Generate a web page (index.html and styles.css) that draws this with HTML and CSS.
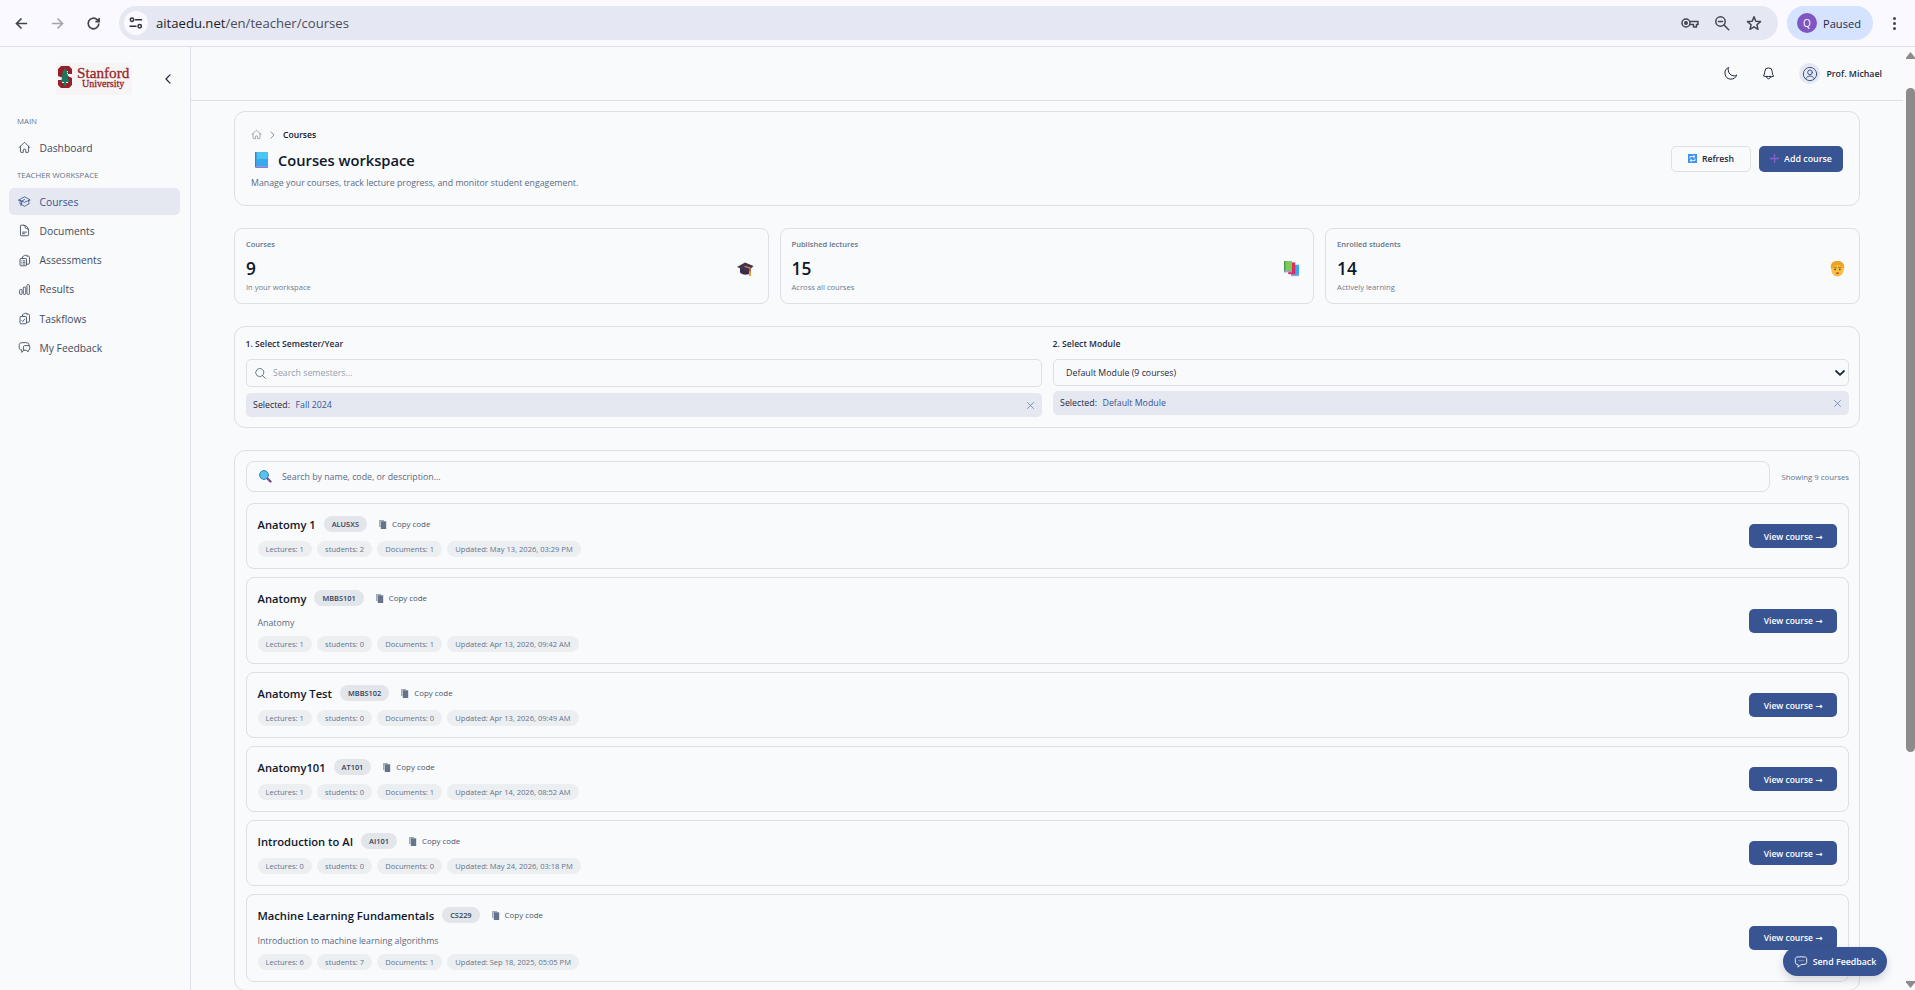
FILE: index.html
```html
<!DOCTYPE html>
<html lang="en">
<head>
    <meta charset="UTF-8">
    <meta name="viewport" content="width=device-width, initial-scale=1.0">
    <title>Courses workspace</title>
    <link rel="stylesheet" href="styles.css">
</head>
<body>
<svg class="sprite" width="0" height="0">
    <symbol id="home" viewBox="0 0 24 24"><path d="M2.25 12l8.95-8.95c.44-.44 1.15-.44 1.6 0L21.75 12M4.5 9.75v10.1c0 .63.5 1.15 1.13 1.15H9.75v-4.9c0-.6.5-1.1 1.13-1.1h2.25c.62 0 1.12.5 1.12 1.1V21h4.13c.62 0 1.12-.5 1.12-1.13V9.75"/></symbol>
    <symbol id="cap" viewBox="0 0 24 24"><path d="M4.26 10.15a60 60 0 0 0-.5 6.35A48.600 48.600 0 0 1 12 20.900a48.600 48.600 0 0 1 8.230-4.400 60 60 0 0 0-.49-6.350M1.600 9.330A60 60 0 0 1 12 3.490a60 60 0 0 1 10.400 5.840 51 51 0 0 0-10.400 4.140A51 51 0 0 0 1.600 9.330zM6.750 15v-3.700A55 55 0 0 1 12 8.440M5 20c1.200-1.300 1.750-3 1.750-5"/></symbol>
    <symbol id="doc" viewBox="0 0 24 24"><path d="M19.500 14.250v-2.600a3.400 3.400 0 0 0-3.400-3.400h-1.500c-.6 0-1.100-.5-1.100-1.100V5.600a3.400 3.400 0 0 0-3.400-3.400H5.600c-.6 0-1.100.5-1.100 1.100v17.300c0 .6.500 1.100 1.100 1.100h12.800c.6 0 1.100-.5 1.100-1.100zM10.500 2.250a9 9 0 0 1 9 9M8.250 15h7.500m-7.500 3H12"/></symbol>
    <symbol id="clip-list" viewBox="0 0 24 24"><path d="M16 18.750h3a2.250 2.250 0 0 0 2.250-2.250V6.100c0-1.100-.8-2-1.900-2.200l-3-.2M8.250 6.100c0-1.100.8-2 1.900-2.200l1.200-.1A2.250 2.250 0 0 1 13.500 2.250H15a2.250 2.250 0 0 1 2.200 1.600M8.250 8.250H4.900c-.6 0-1.100.5-1.100 1.100v11.300c0 .6.500 1.100 1.100 1.100h9.700c.6 0 1.100-.5 1.100-1.100V9.400c0-.6-.5-1.100-1.100-1.100zM8.250 8.250V6.100M7 12.500h.1M7 15.500h.1M7 18.500h.1M9.800 12.500h3M9.800 15.500h3M9.800 18.500h3"/></symbol>
    <symbol id="clip-check" viewBox="0 0 24 24"><path d="M16 18.750h3a2.250 2.250 0 0 0 2.250-2.250V6.100c0-1.100-.8-2-1.900-2.200l-3-.2M8.250 6.100c0-1.100.8-2 1.900-2.200l1.200-.1A2.250 2.250 0 0 1 13.500 2.250H15a2.250 2.250 0 0 1 2.200 1.600M8.250 8.250H4.900c-.6 0-1.100.5-1.100 1.100v11.300c0 .6.500 1.100 1.100 1.100h9.700c.6 0 1.100-.5 1.100-1.100V9.400c0-.6-.5-1.100-1.100-1.100zM8.250 8.250V6.100M7 15.700l1.900 1.900 3.600-4.600"/></symbol>
    <symbol id="bars" viewBox="0 0 24 24"><path d="M3 13.100c0-.6.500-1.100 1.100-1.100h2.300c.6 0 1.100.5 1.100 1.100v6.800c0 .6-.5 1.100-1.100 1.100H4.100c-.6 0-1.100-.5-1.100-1.100zM9.750 8.600c0-.6.500-1.100 1.100-1.100h2.300c.6 0 1.100.5 1.100 1.100v11.300c0 .6-.5 1.100-1.100 1.100h-2.300c-.6 0-1.100-.5-1.100-1.100zM16.500 4.100c0-.6.500-1.100 1.100-1.100h2.300c.6 0 1.100.5 1.100 1.100v15.800c0 .6-.5 1.100-1.100 1.100h-2.300c-.6 0-1.100-.5-1.100-1.100z"/></symbol>
    <symbol id="chats" viewBox="0 0 24 24"><path d="M20.250 8.500c.9.300 1.500 1.100 1.500 2.100v4.300c0 1.100-.8 2.100-2 2.200l-1 .1v3l-3-3c-1.400 0-2.700-.1-4-.2-.6 0-1.100-.3-1.400-.6M20.250 8.500a48 48 0 0 0-8.300 0c-1.100.1-1.900 1-1.900 2.100v4.300c0 .8.500 1.600 1.200 2M20.250 8.500V6.600c0-1.600-1.100-3-2.800-3.200a48 48 0 0 0-12.400 0C3.400 3.600 2.250 5 2.250 6.600v6.300c0 1.600 1.200 3 2.800 3.200l1.900.2V21l4.200-4.200"/></symbol>
    <symbol id="chat" viewBox="0 0 24 24"><path d="M8.600 9.800h.1m3.300 0h.1m3.300 0h.1M2.250 12.800c0 1.600 1.100 3 2.700 3.200l2.100.3V21l4.200-4.200c.2-.2.500-.3.800-.3 2.300-.1 4.600-.3 6.900-.6a3.300 3.300 0 0 0 2.800-3.200V6.700c0-1.600-1.200-3-2.800-3.200a48 48 0 0 0-14 0C3.400 3.700 2.250 5.100 2.250 6.700z"/></symbol>
    <symbol id="search" viewBox="0 0 24 24"><path d="M21 21l-5.200-5.200m0 0A7.500 7.500 0 1 0 5.200 5.200a7.500 7.500 0 0 0 10.600 10.600z"/></symbol>
    <symbol id="close" viewBox="0 0 24 24"><path d="M4 4l16 16M20 4L4 20"/></symbol>
    <symbol id="copy" viewBox="0 0 8 9"><path d="M0 0h5v1.500H1.500V7H0z" fill="#a3abb8"/><path d="M1.800 1.300h5.400V9H1.800z" fill="#64748b"/></symbol>
</svg>

<div class="browser">
    <svg class="nav-icon back" viewBox="0 0 24 24"><path d="M21 12H4M12 4l-8 8 8 8"/></svg>
    <svg class="nav-icon forward" viewBox="0 0 24 24"><path d="M3 12h17M12 4l8 8-8 8"/></svg>
    <svg class="nav-icon reload" viewBox="0 0 24 24"><path d="M20.500 12a8.500 8.500 0 1 1-2.700-6.200L21 9M21 3v6h-6"/></svg>
    <div class="omnibox">
        <span class="site-info">
            <svg viewBox="0 0 14 12"><circle cx="3" cy="2.700" r="1.700"/><path d="M6.500 2.700h6M1 9.300h6"/><circle cx="10.700" cy="9.300" r="1.700"/></svg>
        </span>
        <span class="url"><b>aitaedu.net</b>/en/teacher/courses</span>
        <svg class="omni-icon key" viewBox="0 0 18 10"><circle cx="5" cy="5" r="4"/><circle cx="5" cy="5" r="1.200" class="dot"/><path d="M9 3.500h8v3h-1.500V9h-3V6.500H9"/></svg>
        <svg class="omni-icon" viewBox="0 0 16 16"><circle cx="6.500" cy="6.500" r="4.700"/><path d="M10 10l4.700 4.700M4.500 6.500h4"/></svg>
        <svg class="omni-icon" viewBox="0 0 16 16"><path d="M8 1.800l1.800 4.400 4.700.4-3.600 3.100 1.100 4.600L8 11.800l-4 2.500 1.100-4.600L1.500 6.600l4.700-.4z"/></svg>
    </div>
    <div class="profile"><span class="badge">Q</span>Paused</div>
    <div class="dots"><i></i><i></i><i></i></div>
</div>

<div class="app">
    <aside class="sidebar">
        <div class="brand">
            <div class="logo">
                <svg viewBox="0 0 14 22"><path d="M3 0h8l3 3v5h-4V5H5v3l9 4v7l-3 3H3l-3-3v-5h4v3h6v-3L0 10V3z" fill="#96202a"/><path d="M7 2l3 5H8.800l2 4H9.500l2 5H8v4H6v-4H2.500l2-5H3.200l2-4H4z" fill="#17795f"/></svg>
                <div class="logo-text"><span>Stanford</span><small>University</small></div>
            </div>
            <svg class="collapse" viewBox="0 0 6 10"><path d="M5 .8L1 5l4 4.200"/></svg>
        </div>
        <div class="nav-label">MAIN</div>
        <a class="nav-item"><svg><use href="#home"/></svg>Dashboard</a>
        <div class="nav-label second">TEACHER WORKSPACE</div>
        <a class="nav-item active"><svg><use href="#cap"/></svg>Courses</a>
        <a class="nav-item"><svg><use href="#doc"/></svg>Documents</a>
        <a class="nav-item"><svg><use href="#clip-list"/></svg>Assessments</a>
        <a class="nav-item"><svg><use href="#bars"/></svg>Results</a>
        <a class="nav-item"><svg><use href="#clip-check"/></svg>Taskflows</a>
        <a class="nav-item"><svg><use href="#chats"/></svg>My Feedback</a>
    </aside>

    <div class="content">
        <header class="topbar">
            <svg class="moon" viewBox="0 0 24 24"><path d="M21.750 15a9.700 9.700 0 0 1-3.700.8A9.750 9.750 0 0 1 8.250 6c0-1.300.3-2.600.8-3.700A9.750 9.750 0 0 0 12.750 21a9.750 9.750 0 0 0 9-6z"/></svg>
            <svg class="bell" viewBox="0 0 24 24"><path d="M14.900 17.500c1.800-.2 3.600-.6 5.400-1.300A9 9 0 0 1 18 9.750V9A6 6 0 0 0 6 9v.75a9 9 0 0 1-2.300 6c1.700.6 3.500 1 5.400 1.300m5.800-.5a24 24 0 0 1-5.800.2m5.800 0a3 3 0 1 1-5.800 0"/></svg>
            <span class="avatar"><svg viewBox="0 0 24 24"><circle cx="12" cy="12" r="10"/><circle cx="12" cy="9.500" r="3.500"/><path d="M5.500 19c1.500-2.500 4-4 6.500-4s5 1.500 6.500 4"/></svg></span>
            <span class="user">Prof. Michael</span>
        </header>

        <main>
            <section class="card hero">
                <div class="hero-text">
                    <div class="crumbs">
                        <svg><use href="#home"/></svg>
                        <svg class="chev" viewBox="0 0 6 10"><path d="M1 1l4 4-4 4"/></svg>
                        <span>Courses</span>
                    </div>
                    <h1>
                        <svg viewBox="0 0 13 16"><path d="M0 0h13v14H0z" fill="#4ac6f5"/><path d="M2 7h11v7H2z" fill="#3aa8ef"/><path d="M0 0h1.500v15.500H0z" fill="#2f86c6"/><path d="M1 14h12v1H1z" fill="#a48fdf"/><path d="M1 15h12v.8H1z" fill="#4c76c8"/></svg>
                        Courses workspace
                    </h1>
                    <p>Manage your courses, track lecture progress, and monitor student engagement.</p>
                </div>
                <button class="btn outline"><svg viewBox="0 0 9 9"><path d="M0 0h9v9H0z" fill="#3f94f2"/><path d="M2 4V2.500h4.500M7 5v1.500H2.500M5.500 1.300L7 2.500 5.500 3.700M3.500 5.300L2 6.500l1.500 1.200" fill="none" stroke="#fff" stroke-width=".8"/></svg>Refresh</button>
                <button class="btn primary"><svg viewBox="0 0 9 9"><path d="M4.500 0v9M0 4.500h9" stroke="#8660c8" stroke-width="1.400"/></svg>Add course</button>
            </section>

            <section class="stats">
                <div class="card stat">
                    <div><span class="stat-label">Courses</span><strong>9</strong><small>In your workspace</small></div>
                    <svg viewBox="0 0 17 15"><path d="M3 6l11 1v4c-3 3-8 3-11 0z" fill="#3a2b4b"/><path d="M0 5.500L8 1l8.500 3.500L11 10z" fill="#40334f"/><path d="M8 5l5 1.500V13" fill="none" stroke="#f1913d" stroke-width="1.200"/><path d="M12 10h2v4.500h-2z" fill="#f49a45"/></svg>
                </div>
                <div class="card stat">
                    <div><span class="stat-label">Published lectures</span><strong>15</strong><small>Across all courses</small></div>
                    <svg viewBox="0 0 17 17"><path d="M8 4h8.500v12H8z" fill="#36aaf0"/><path d="M8 14.500h8.500V16H8z" fill="#9c9ce8"/><path d="M5 1.500h7.500V14H5z" fill="#df2d5c"/><path d="M.5 0H9v10.500H.5z" fill="#7ccc58"/><path d="M.5 0H2v12H.5z" fill="#489755"/><path d="M1 10.500h8V12H1z" fill="#a99ada"/></svg>
                </div>
                <div class="card stat">
                    <div><span class="stat-label">Enrolled students</span><strong>14</strong><small>Actively learning</small></div>
                    <svg class="face" viewBox="0 0 15 17"><ellipse cx="7.500" cy="9" rx="6.600" ry="7.500" fill="#f9bf3a"/><path d="M.5 9C-.5 2 3 0 7.500 0s8 2.500 7 9l-1.500-3L9 4 4 5 1.500 7z" fill="#eba324"/><path d="M3.500 6.800h3M8.500 6.800h3" stroke="#a4602a" stroke-width=".8"/><circle cx="5" cy="8.800" r=".9" fill="#4d3c50"/><circle cx="10" cy="8.800" r=".9" fill="#4d3c50"/><ellipse cx="7.500" cy="13" rx="1.600" ry="1" fill="#c4542c"/></svg>
                </div>
            </section>

            <section class="card filters">
                <div class="filter">
                    <label>1. Select Semester/Year</label>
                    <div class="field search-field"><svg><use href="#search"/></svg>Search semesters...</div>
                    <div class="selected"><span>Selected:</span><em>Fall 2024</em><svg><use href="#close"/></svg></div>
                </div>
                <div class="filter">
                    <label>2. Select Module</label>
                    <div class="field select-field">Default Module (9 courses)<svg viewBox="0 0 10 6"><path d="M1 1l4 3.800L9 1"/></svg></div>
                    <div class="selected"><span>Selected:</span><em>Default Module</em><svg><use href="#close"/></svg></div>
                </div>
            </section>

            <section class="card courses">
                <div class="list-head">
                    <div class="list-search"><svg viewBox="0 0 13 13"><path d="M8.500 8.500l3 3" stroke="#7b4a80" stroke-width="2.400"/><circle cx="5" cy="5" r="4.400" fill="#56c5ee" stroke="#3a7fae" stroke-width="1"/></svg>Search by name, code, or description...</div>
                    <span class="count">Showing 9 courses</span>
                </div>

                <article class="course">
                    <div>
                        <div class="course-head"><h2>Anatomy 1</h2><span class="code">ALU5XS</span><span class="copy"><svg><use href="#copy"/></svg>Copy code</span></div>
                        <div class="chips"><span>Lectures: 1</span><span>students: 2</span><span>Documents: 1</span><span>Updated: May 13, 2026, 03:29 PM</span></div>
                    </div>
                    <button class="view">View course <i>→</i></button>
                </article>

                <article class="course">
                    <div>
                        <div class="course-head"><h2>Anatomy</h2><span class="code">MBBS101</span><span class="copy"><svg><use href="#copy"/></svg>Copy code</span></div>
                        <p>Anatomy</p>
                        <div class="chips"><span>Lectures: 1</span><span>students: 0</span><span>Documents: 1</span><span>Updated: Apr 13, 2026, 09:42 AM</span></div>
                    </div>
                    <button class="view">View course <i>→</i></button>
                </article>

                <article class="course">
                    <div>
                        <div class="course-head"><h2>Anatomy Test</h2><span class="code">MBBS102</span><span class="copy"><svg><use href="#copy"/></svg>Copy code</span></div>
                        <div class="chips"><span>Lectures: 1</span><span>students: 0</span><span>Documents: 0</span><span>Updated: Apr 13, 2026, 09:49 AM</span></div>
                    </div>
                    <button class="view">View course <i>→</i></button>
                </article>

                <article class="course">
                    <div>
                        <div class="course-head"><h2>Anatomy101</h2><span class="code">AT101</span><span class="copy"><svg><use href="#copy"/></svg>Copy code</span></div>
                        <div class="chips"><span>Lectures: 1</span><span>students: 0</span><span>Documents: 1</span><span>Updated: Apr 14, 2026, 08:52 AM</span></div>
                    </div>
                    <button class="view">View course <i>→</i></button>
                </article>

                <article class="course">
                    <div>
                        <div class="course-head"><h2>Introduction to AI</h2><span class="code">AI101</span><span class="copy"><svg><use href="#copy"/></svg>Copy code</span></div>
                        <div class="chips"><span>Lectures: 0</span><span>students: 0</span><span>Documents: 0</span><span>Updated: May 24, 2026, 03:18 PM</span></div>
                    </div>
                    <button class="view">View course <i>→</i></button>
                </article>

                <article class="course">
                    <div>
                        <div class="course-head"><h2>Machine Learning Fundamentals</h2><span class="code">CS229</span><span class="copy"><svg><use href="#copy"/></svg>Copy code</span></div>
                        <p>Introduction to machine learning algorithms</p>
                        <div class="chips"><span>Lectures: 6</span><span>students: 7</span><span>Documents: 1</span><span>Updated: Sep 18, 2025, 05:05 PM</span></div>
                    </div>
                    <button class="view">View course <i>→</i></button>
                </article>
            </section>
        </main>
    </div>

    <div class="scrollbar">
        <svg viewBox="0 0 9 7"><path d="M4.500 0L9 5.500V7H0V5.500z"/></svg>
        <div class="thumb"></div>
        <svg class="down" viewBox="0 0 9 7"><path d="M4.500 7L9 1.500V0H0v1.500z"/></svg>
    </div>
</div>

<button class="feedback"><svg><use href="#chat"/></svg>Send Feedback</button>
</body>
</html>
```
FILE: styles.css
```css
* {
    margin: 0;
    padding: 0;
    box-sizing: border-box;
}

body {
    height: 990px;
    overflow: hidden;
    background: #f9fafc;
    color: #1e293b;
    font-family: 'Open Sans', 'Noto Sans', sans-serif;
    font-size: 8.8px;
}

svg {
    display: block;
    flex: none;
    fill: none;
    stroke: currentColor;
    stroke-width: 1.5;
    stroke-linecap: round;
    stroke-linejoin: round;
}

svg [fill]:not([stroke]) {
    stroke: none;
}

button {
    font-family: inherit;
    border: none;
}

.sprite {
    position: absolute;
}

/* browser bar */
.browser {
    display: flex;
    align-items: center;
    height: 47px;
    padding: 6px 14px;
    background: #faf9ff;
    border-bottom: 1px solid #dcdfe8;
}

.nav-icon {
    width: 15px;
    height: 15px;
    margin-right: 21px;
    color: #41454f;
    stroke-width: 2.7;
    stroke-linecap: butt;
    stroke-linejoin: miter;
}

.nav-icon.forward {
    color: #a5a6ad;
}

.nav-icon.reload {
    margin-right: 18px;
}

.omnibox {
    display: flex;
    align-items: center;
    width: 1659px;
    height: 34px;
    padding: 0 16px 0 5px;
    border-radius: 17px;
    background: #e5e7f2;
}

.site-info {
    display: flex;
    align-items: center;
    justify-content: center;
    width: 24px;
    height: 24px;
    border-radius: 50%;
    background: #faf9ff;
}

.site-info svg {
    width: 14px;
    height: 12px;
    color: #30333b;
}

.url {
    flex: 1;
    margin-left: 8px;
    font-size: 13.1px;
    color: #4a4e5a;
}

.url b {
    font-weight: 400;
    color: #1c1d22;
}

.omni-icon {
    width: 16px;
    height: 16px;
    margin-left: 16px;
    color: #43464f;
}

.omni-icon.key {
    width: 18px;
    height: 10px;
    margin: 0 -1px 0 0;
}

.omni-icon .dot {
    fill: currentColor;
}

.profile {
    display: flex;
    align-items: center;
    width: 86px;
    height: 34px;
    margin-left: 9px;
    padding-left: 10px;
    border-radius: 17px;
    background: #d5e3ff;
    color: #1c2a4c;
    font-size: 11.1px;
}

.badge {
    width: 20px;
    height: 20px;
    margin-right: 6px;
    border-radius: 50%;
    background: #7e57c2;
    color: #fff;
    font-size: 10px;
    line-height: 20px;
    text-align: center;
}

.dots {
    display: flex;
    flex-direction: column;
    gap: 2px;
    margin-left: 20px;
}

.dots i {
    width: 3px;
    height: 3px;
    border-radius: 50%;
    background: #43464f;
}

/* app shell */
.app {
    display: flex;
    height: 943px;
}

.sidebar {
    width: 191px;
    padding: 0 10px 0 9px;
    border-right: 1px solid #dbdfe7;
}

.brand {
    display: flex;
    align-items: center;
    justify-content: space-between;
    height: 63px;
    padding: 0 9px 0 47px;
}

.logo {
    display: flex;
    align-items: center;
    gap: 5px;
    width: 76px;
    height: 32px;
    padding: 0 0 3px 2px;
    background: #f6f4f4;
    color: #97262b;
    font-family: 'Liberation Serif', serif;
}

.logo svg {
    width: 14px;
    height: 22px;
}

.logo-text {
    text-align: center;
    -webkit-text-stroke: 0.3px #97262b;
}

.logo-text span {
    display: block;
    font-size: 15.2px;
    line-height: 13px;
}

.logo-text small {
    display: block;
    font-size: 10px;
    line-height: 10px;
}

.collapse {
    width: 6px;
    height: 10px;
    stroke-width: 1.2;
}

.nav-label {
    height: 23px;
    padding-left: 8px;
    color: #64748b;
    font-size: 7.8px;
    font-weight: 500;
    line-height: 23px;
}

.nav-label.second {
    height: 26px;
    line-height: 26px;
}

.nav-item {
    display: flex;
    align-items: center;
    gap: 8.5px;
    height: 27px;
    margin-bottom: 2.3px;
    padding-left: 9px;
    border-radius: 5px;
    color: #3f4b5d;
    font-size: 10.3px;
}

.nav-label + .nav-item:not(.active) {
    height: 29px;
    margin-bottom: 0;
}

.nav-item svg {
    width: 13px;
    height: 13px;
    stroke-width: 1.6;
}

.nav-item.active {
    background: #e5e8f0;
    color: #385493;
}

.content {
    width: 1712px;
}

.topbar {
    display: flex;
    align-items: center;
    justify-content: flex-end;
    height: 54px;
    padding-right: 21px;
    border-bottom: 1px solid #dbdfe7;
}

.moon,
.bell {
    width: 15px;
    height: 15px;
    margin-right: 23px;
    stroke-width: 1.6;
}

.avatar {
    display: flex;
    align-items: center;
    justify-content: center;
    width: 21px;
    height: 21px;
    margin-right: 6px;
    border-radius: 50%;
    background: #e5e8f0;
    color: #385493;
}

.avatar svg {
    width: 16px;
    height: 16px;
}

.user {
    font-size: 8.8px;
    font-weight: 600;
}

main {
    display: flex;
    flex-direction: column;
    gap: 22px;
    height: 889px;
    padding: 10px 43px 0;
    overflow: hidden;
}

.card {
    flex: none;
    border: 1px solid #dcdfe5;
    border-radius: 11px;
}

/* page header */
.hero {
    display: flex;
    align-items: center;
    height: 95px;
    padding: 0 16px;
}

.hero-text {
    flex: 1;
}

.crumbs {
    display: flex;
    align-items: center;
    height: 14px;
    color: #0f172a;
    font-size: 8.6px;
    font-weight: 600;
}

.crumbs svg {
    width: 11px;
    height: 11px;
    color: #7b8798;
}

.crumbs .chev {
    width: 5px;
    height: 8px;
    margin: 0 8.500px 0 7.500px;
    stroke-width: 1.1;
}

h1 {
    display: flex;
    align-items: center;
    gap: 10px;
    height: 22px;
    margin: 7px 0 5px;
    padding-left: 4px;
    color: #0f172a;
    font-size: 14.7px;
    font-weight: 600;
}

h1 svg {
    width: 13px;
    height: 16px;
}

.hero p {
    color: #5b6a80;
    line-height: 14px;
}

.btn {
    display: flex;
    align-items: center;
    justify-content: center;
    gap: 5px;
    height: 26px;
    border-radius: 5px;
    font-size: 8.7px;
    font-weight: 600;
}

.btn svg {
    width: 9px;
    height: 9px;
}

.btn.outline {
    width: 80px;
    margin-right: 8px;
    border: 1px solid #dcdfe5;
    background: transparent;
    color: #1e293b;
}

.btn.primary {
    width: 84px;
    background: #385493;
    color: #fff;
    font-size: 8.9px;
}

/* stat cards */
.stats {
    display: grid;
    grid-template-columns: repeat(3, 1fr);
    gap: 10.67px;
}

.stat {
    display: flex;
    align-items: center;
    justify-content: space-between;
    height: 76px;
    padding: 0 13.500px 0 11px;
    border-radius: 8px;
}

.stat span,
.stat strong,
.stat small {
    display: block;
}

.stat-label {
    color: #64748b;
    font-size: 7.5px;
    font-weight: 600;
    line-height: 11px;
}

.stat strong {
    margin: 7.5px 0 3.5px;
    color: #0f172a;
    font-size: 17.3px;
    font-weight: 600;
    line-height: 21px;
}

.stat small {
    color: #6e7b8d;
    font-size: 7.6px;
    line-height: 11px;
}

.stat svg {
    width: 17px;
    height: 16px;
    margin-top: 6px;
}

.stat .face {
    width: 15px;
}

/* semester and module pickers */
.filters {
    display: grid;
    grid-template-columns: 1fr 1fr;
    gap: 10.6px;
    height: 102px;
    padding: 9px 10px 0 10.6px;
}

.filter label {
    display: block;
    height: 23px;
    font-size: 8.6px;
    font-weight: 600;
    line-height: 17px;
}

.field {
    display: flex;
    align-items: center;
    border: 1px solid #dcdfe5;
    border-radius: 5px;
}

.search-field {
    gap: 6px;
    height: 28px;
    margin-bottom: 6px;
    padding-left: 7.5px;
    color: #94a0af;
}

.search-field svg {
    width: 13px;
    height: 13px;
    color: #64748b;
    stroke-width: 1.8;
}

.select-field {
    justify-content: space-between;
    height: 27px;
    margin-bottom: 5px;
    padding: 0 3px 0 12.500px;
}

.select-field svg {
    width: 10px;
    height: 6px;
    stroke-width: 1.8;
}

.selected {
    display: flex;
    align-items: center;
    height: 24px;
    padding: 0 7.5px;
    border-radius: 5px;
    background: #e5e8f0;
}

.selected em {
    flex: 1;
    margin-left: 5.5px;
    color: #385493;
    font-style: normal;
    font-weight: 500;
}

.selected svg {
    width: 9px;
    height: 9px;
    color: #6d82b0;
    stroke-width: 2.2;
}

/* course list */
.courses {
    padding: 10px 10px 0 11px;
}

.list-head {
    display: flex;
    align-items: center;
    justify-content: space-between;
    margin-bottom: 11px;
}

.list-search {
    display: flex;
    align-items: center;
    gap: 10px;
    width: 1524px;
    height: 31px;
    padding-left: 12px;
    border: 1px solid #dcdfe5;
    border-radius: 8px;
    color: #5b6a80;
}

.list-search svg {
    width: 13px;
    height: 13px;
}

.count {
    color: #64748b;
    font-size: 7.8px;
    font-weight: 500;
}

.course {
    display: flex;
    align-items: center;
    justify-content: space-between;
    margin-bottom: 8px;
    padding: 11px 11px 11px 10.500px;
    border: 1px solid #dcdfe5;
    border-radius: 8px;
}

.course-head {
    display: flex;
    align-items: center;
    height: 18px;
}

h2 {
    color: #0f172a;
    font-size: 11.2px;
    font-weight: 600;
}

.code {
    height: 16px;
    margin: 0 12px 0 8px;
    padding: 0 8px;
    border-radius: 8px;
    background: #e2e5e9;
    color: #334155;
    font-size: 7.4px;
    font-weight: 600;
    line-height: 16px;
}

.copy {
    display: flex;
    align-items: center;
    gap: 5px;
    color: #475569;
    font-size: 7.9px;
    font-weight: 500;
}

.copy svg {
    width: 8px;
    height: 9px;
}

.course p {
    height: 14px;
    margin-top: 7.3px;
    color: #5b6a80;
    line-height: 18px;
}

.chips {
    display: flex;
    gap: 5.3px;
    margin-top: 8px;
}

.chips span {
    height: 16px;
    padding: 0 8px;
    border-radius: 8px;
    background: #eceff2;
    color: #64748b;
    font-size: 7.55px;
    line-height: 16px;
}

.view {
    width: 88px;
    height: 24px;
    border-radius: 5px;
    background: #385493;
    color: #fff;
    font-size: 8.5px;
    font-weight: 600;
}

.view i {
    font-family: 'DejaVu Sans', sans-serif;
    font-style: normal;
}

/* page scrollbar */
.scrollbar {
    display: flex;
    flex-direction: column;
    width: 12px;
    padding: 5px 0 2px 3px;
    background: #fafafc;
}

.scrollbar svg {
    width: 9px;
    height: 7px;
    fill: #8b8b8b;
    stroke: none;
}

.scrollbar .down {
    margin-top: auto;
}

.thumb {
    width: 9px;
    height: 664px;
    margin-top: 29px;
    border-radius: 5px;
    background: #8b8b8b;
}

.feedback {
    position: absolute;
    right: 28px;
    bottom: 14px;
    display: flex;
    align-items: center;
    justify-content: center;
    gap: 5px;
    width: 104px;
    height: 29px;
    border-radius: 15px;
    background: #385493;
    box-shadow: 0 4px 9px rgba(15, 23, 42, 0.16);
    color: #fff;
    font-size: 8.8px;
    font-weight: 600;
}

.feedback svg {
    width: 14px;
    height: 14px;
}
```
